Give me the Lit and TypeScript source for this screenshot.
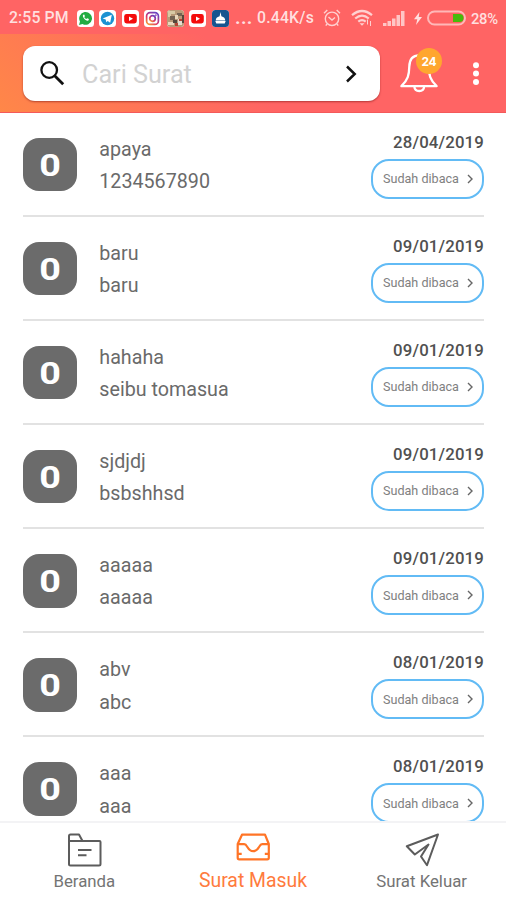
import { LitElement, html, css, svg } from "lit";
import { customElement, property } from "lit/decorators.js";

interface Letter {
  title: string;
  detail: string;
  date: string;
}

const LETTERS: Letter[] = [
  { title: "apaya", detail: "1234567890", date: "28/04/2019" },
  { title: "baru", detail: "baru", date: "09/01/2019" },
  { title: "hahaha", detail: "seibu tomasua", date: "09/01/2019" },
  { title: "sjdjdj", detail: "bsbshhsd", date: "09/01/2019" },
  { title: "aaaaa", detail: "aaaaa", date: "09/01/2019" },
  { title: "abv", detail: "abc", date: "08/01/2019" },
  { title: "aaa", detail: "aaa", date: "08/01/2019" },
];

const youtube = svg`<rect x="2.2" y="4" width="12.6" height="9.4" rx="2.4" fill="#f40b0b"/><path d="M7 6.5l4 2.2-4 2.2z" fill="#fff"/>`;

@customElement("status-bar")
class StatusBar extends LitElement {
  static styles = css`
    :host { display: flex; align-items: center; height: 34px; padding: 2px 8px 0 9px; box-sizing: border-box;
      color: #ffdfdf; font: 500 15.8px/20px Roboto, sans-serif; white-space: nowrap; }
    .apps { display: flex; gap: 5.5px; margin-left: 6.5px; }
    .apps svg { width: 17px; height: 17px; border-radius: 3.5px; display: block; background: #fff; }
    .time { width: 61px; letter-spacing: 0.1px; }
    .dots { margin-left: 6.5px; width: 22px; font-size: 19px; font-weight: 700; letter-spacing: 0.4px; line-height: 16px; }
    .rate { width: 58px; letter-spacing: 0.2px; }
    .alarm { margin-left: 8px; }
    .wifi { margin-left: 10px; }
    .bars { margin-left: 10px; }
    .bolt { margin-left: 9px; }
    .cell { margin-left: 5px; }
    .pct { margin-left: auto; font-size: 14.8px; letter-spacing: -0.2px; padding-top: 1px; }
    svg { flex: none; display: block; }
  `;
  render() {
    return html`
      <span class="time">2:55 PM</span>
      <div class="apps">
        <svg viewBox="0 0 17 17"><path d="M2 15l1-3.5a6.4 6.4 0 1 1 2.500 2.500z" fill="#22ac43"/><path d="M6.200 4.800c-1.700 1.700 2.900 7 5.200 5.600l.6-1.300-1.800-.9-.9.900c-1-.4-1.700-1.200-2.100-2.100l.8-.7-.8-1.700z" fill="#fff"/></svg>
        <svg viewBox="0 0 17 17"><circle cx="8.500" cy="8.500" r="6.700" fill="#1c92d2"/><path d="M3.600 8.400l9.200-3.700-1.600 8-2.500-1.800-1.400 1.400-.6-2.700z" fill="#fff"/></svg>
        <svg viewBox="0 0 17 17">${youtube}</svg>
        <svg viewBox="0 0 17 17">
          <defs><linearGradient id="ig" x1="0" y1="1" x2="0.700" y2="0"><stop offset="0" stop-color="#f9a52c"/><stop offset=".45" stop-color="#dc3468"/><stop offset="1" stop-color="#6b43c0"/></linearGradient></defs>
          <g fill="none" stroke="url(#ig)" stroke-width="1.700"><rect x="2.600" y="2.600" width="11.800" height="11.800" rx="3.500"/><circle cx="8.500" cy="8.500" r="2.800"/></g><circle cx="11.900" cy="5.100" r=".9" fill="#8a3fb5"/>
        </svg>
        <svg viewBox="0 0 17 17"><path d="M0 0h17v17H0z" fill="#b99a78"/><path d="M1 1h7v3H4v3H1z" fill="#d8c9a4"/><path d="M3 6h5v4H3zM10 3h5v3h-5z" fill="#746353"/><path d="M8 5h3v4H8zM1 12h6v3H1z" fill="#ead8bd"/><path d="M11 9h4v6h-4z" fill="#e5ded2"/><path d="M12 9h3v2h-3zM8 13h3v3H8z" fill="#b34636"/><path d="M6 10h4v3H6zM15 5h2v8h-2z" fill="#55483d"/></svg>
        <svg viewBox="0 0 17 17">${youtube}</svg>
        <svg viewBox="0 0 17 17"><path d="M0 0h17v17H0z" fill="#16548f"/><path d="M8.500 2l.9 4.200c2.700.6 3.700 2.200 3.900 4.300H3.700c.2-2.100 1.200-3.700 3.900-4.300zM3.300 11h10.400l-1 2.500H4.300z" fill="#fff"/></svg>
      </div>
      <span class="dots">...</span>
      <span class="rate">0.44K/s</span>
      <svg class="alarm" width="18" height="18" viewBox="0 0 18 18" fill="none" stroke="#ffd0d0" stroke-width="1.400"><circle cx="9" cy="9.800" r="6.700"/><path d="M5.500 8l3.500 3 3-2.500M1 4.300L4.300 1M17 4.300L13.700 1M4 15l-1.200 1.700M14 15l1.200 1.700"/></svg>
      <svg class="wifi" width="22" height="18" viewBox="0 0 22 18" fill="none" stroke="#ffd0d0" stroke-width="2.200"><path d="M1 6.200Q11-2.200 21 6.200M4.200 9.500Q11 3.900 17.800 9.500M7.300 12.700Q11 9.600 14.700 12.700"/><path d="M8.500 14.200h5L11 16.800z" fill="#ffd0d0" stroke="none"/><path d="M16.500 10.500v5M19.500 12v5" stroke-width="1"/></svg>
      <svg class="bars" width="22" height="16" viewBox="0 0 22 16" fill="#ffc6c6"><path d="M0 13h3.500v3H0zM4.500 11h3.500v5H4.500zM9 8.500h3.500V16H9zM13.500 5H17v11h-3.500zM18 1h3.500v15H18z"/></svg>
      <svg class="bolt" width="8" height="13" viewBox="0 0 8 13" fill="#ffe0e0"><path d="M5.500 0L0 7.300h3.300L2 13l6-8H4.700z"/></svg>
      <svg class="cell" width="39" height="16" viewBox="0 0 39 16"><rect x="1" y="1.500" width="37" height="13" rx="6.500" fill="none" stroke="#ffb8b8" stroke-width="2"/><path d="M26 4h6.500a4 4 0 0 1 0 8H26z" fill="#46bb0b"/></svg>
      <span class="pct">28%</span>`;
  }
}

@customElement("search-header")
class SearchHeader extends LitElement {
  static styles = css`
    :host { display: flex; height: 78.500px; box-sizing: border-box; padding: 12px 0 0 23px;
      background: linear-gradient(45deg, #ff8748 0%, #ff6464 48%); border-bottom: 1px solid #f4595a; }
    .box { width: 357px; height: 55px; box-sizing: border-box; border-radius: 12px; background: #fff; display: flex; align-items: center;
      padding: 0 23px 0 16px; box-shadow: 0 1px 2px rgba(120, 20, 20, .55); }
    .hint { flex: 1; margin-left: 16px; padding-top: 3px; color: #d2d2d2; font: 400 25.200px/30px Roboto, sans-serif; }
    .bell { position: relative; width: 40px; height: 46px; margin: 2px 0 0 19px; }
    .bell svg { display: block; }
    .count { position: absolute; left: 17px; top: 0; width: 26px; height: 26px; border-radius: 50%; background: #ffa62f; color: #fff;
      font: 700 12px/27px Inter, sans-serif; letter-spacing: -0.300px; text-align: center; }
    .more { margin: 16px 0 0 33px; }
  `;
  render() {
    return html`
      <div class="box">
        <svg width="27" height="27" viewBox="0 0 27 27" fill="none" stroke="#111" stroke-width="2.300"><circle cx="10.200" cy="10" r="7.800"/><path d="M15.700 15.700l8.500 8.500" stroke-width="2.800"/></svg>
        <span class="hint">Cari Surat</span>
        <svg width="12" height="18" viewBox="0 0 12 18" fill="none" stroke="#111" stroke-width="2.500"><path d="M2 1.500L9.700 9 2 16.500"/></svg>
      </div>
      <div class="bell">
        <svg width="40" height="46" viewBox="0 0 40 46" fill="none" stroke="#fff" stroke-width="2.300" stroke-linejoin="round"><path d="M20 7.300C13 7.300 10.500 12 10.300 18.500C10.100 27 9 32 2.400 38.200H37.600C31 32 29.900 27 29.700 18.500C29.500 12 27 7.300 20 7.300zM15.300 38.500c.5 6 9.400 6 9.900 0"/></svg>
        <span class="count">24</span>
      </div>
      <svg class="more" width="8" height="24" viewBox="0 0 8 24" fill="#fff"><circle cx="4" cy="3.300" r="3"/><circle cx="4" cy="11.600" r="3"/><circle cx="4" cy="20" r="3"/></svg>`;
  }
}

@customElement("letter-row")
class LetterRow extends LitElement {
  @property({ attribute: false }) letter!: Letter;
  static styles = css`
    :host { display: flex; flex: none; height: 104.150px; margin: 0 22px 0 23px; box-sizing: border-box; border-bottom: 2px solid #e2e2e2;
      font-family: Roboto, sans-serif; color: #6a6a6a; }
    .badge { width: 53.500px; height: 53.500px; margin-top: 25px; border-radius: 16px; background: #6b6b6b; color: #fff;
      font: 700 32px/54px Roboto, sans-serif; text-align: center; }
    .zero { display: inline-block; transform: scaleX(1.180); }
    .text { flex: 1; margin: 21px 0 0 22.800px; font-size: 19.700px; line-height: 32.300px; white-space: nowrap; }
    .side { display: flex; flex-direction: column; align-items: flex-end; margin-top: 19px; }
    .date { font-weight: 500; font-size: 16.800px; line-height: 20px; letter-spacing: 0.150px; color: #505050; }
    .state { width: 113px; height: 40px; margin-top: 7px; box-sizing: border-box; border: 2px solid #62bbf5; border-radius: 18px;
      display: flex; align-items: center; padding: 0 8.500px 0 10px; justify-content: space-between; font-size: 12.600px; color: #808080; }
  `;
  render() {
    return html`
      <div class="badge"><span class="zero">0</span></div>
      <div class="text"><div>${this.letter.title}</div><div>${this.letter.detail}</div></div>
      <div class="side">
        <div class="date">${this.letter.date}</div>
        <div class="state"><span>Sudah dibaca</span><svg width="7" height="10" viewBox="0 0 7 10" fill="none" stroke="#666" stroke-width="1.400"><path d="M1 1l4 4-4 4"/></svg></div>
      </div>`;
  }
}

@customElement("bottom-nav")
class BottomNav extends LitElement {
  static styles = css`
    :host { display: grid; grid-template-columns: repeat(3, 1fr); height: 79px; flex: none; background: #fff; border-top: 2px solid #f3f3f5; box-sizing: border-box;
      font: 400 16.800px/20px Roboto, sans-serif; color: #747474; position: relative; }
    .tab { display: flex; flex-direction: column; align-items: center; padding-top: 9px; }
    .tab span { margin-top: 3px; }
    .active { color: #ff7b3d; padding-top: 7px; font-size: 19.400px; }
    .active span { margin-top: 5px; }
  `;
  render() {
    return html`
      <div class="tab"><svg width="36" height="36" viewBox="0 0 36 36" fill="none" stroke="#5c5c5c" stroke-width="2" stroke-linejoin="round"><path d="M3 32.500V4q0-1.500 1.500-1.500h8.500L16.500 9H33.500q1 0 1 1v22q0 1.500-1.500 1.500H4.500Q3 33.500 3 32M3 9h13.500M12 18h13.500M12 23.300h8.500"/></svg><span>Beranda</span></div>
      <div class="tab active"><svg width="36" height="36" viewBox="0 0 36 36" fill="none" stroke="#ff7426" stroke-width="2.200" stroke-linejoin="round"><path d="M7 4.700h23L33.800 14v13.800q0 1.500-1.500 1.500H4.200q-1.500 0-1.500-1.500V14zM2.700 14.200h6.500c3.500 0 3 7 9 7s5.500-7 9-7h6.600M2.700 23.800h4M29.800 23.800h4"/></svg><span>Surat Masuk</span></div>
      <div class="tab"><svg width="36" height="36" viewBox="0 0 36 36" fill="none" stroke="#5c5c5c" stroke-width="2" stroke-linejoin="round"><path d="M34 2.500L2.800 14.300l8 8.200L24.500 12.500l-7.500 12 6 8.700z"/></svg><span>Surat Keluar</span></div>`;
  }
}

@customElement("app-root")
class AppRoot extends LitElement {
  static styles = css`
    :host { display: flex; flex-direction: column; height: 900px; background: #fff; overflow: hidden; }
    .top { background: #ff6464; flex: none; }
    .list { flex: 1; min-height: 0; overflow: hidden; display: flex; flex-direction: column; }
  `;
  render() {
    return html`
      <div class="top"><status-bar></status-bar><search-header></search-header></div>
      <div class="list">${LETTERS.map((l) => html`<letter-row .letter=${l}></letter-row>`)}</div>
      <bottom-nav></bottom-nav>`;
  }
}
